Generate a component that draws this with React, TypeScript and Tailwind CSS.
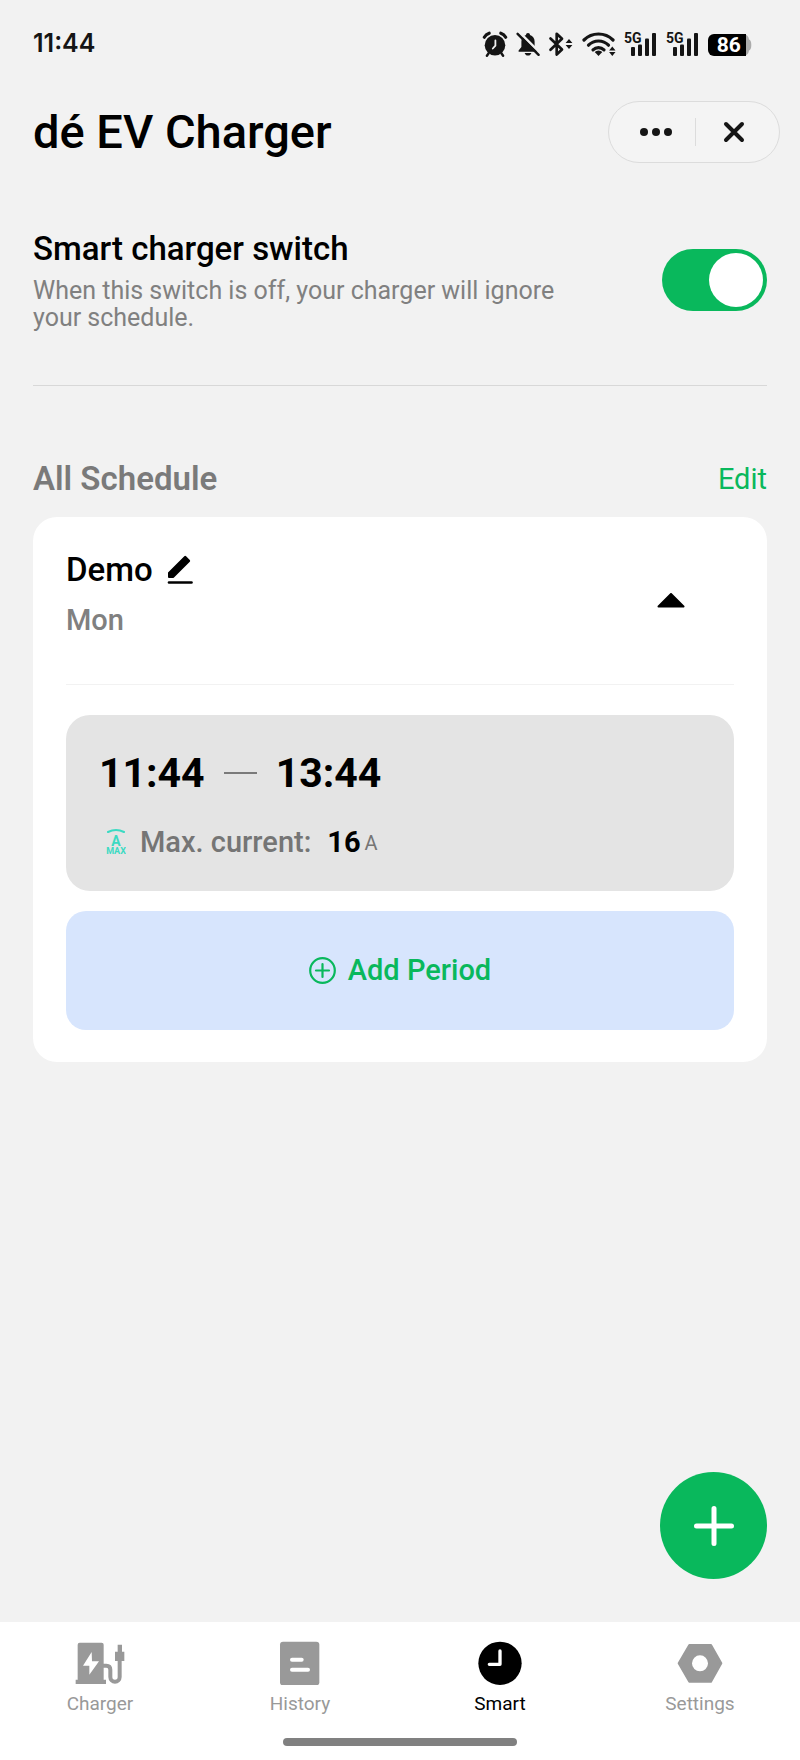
const SignalIcon = () => (
  <svg width="34" height="26" viewBox="0 0 34 26" fill="#151515" aria-hidden="true">
    <text x="0" y="12" fontSize="14" fontWeight="700" fontFamily="Roboto, sans-serif">5G</text>
    <rect x="7" y="16" width="4" height="9" rx="1" />
    <rect x="14" y="13.5" width="4" height="11.5" rx="1" />
    <rect x="21" y="7.5" width="4" height="17.5" rx="1" />
    <rect x="28" y="2" width="4" height="23" rx="1" />
  </svg>
);

const StatusBar = () => {
  return (
    <div className="flex h-[88px] items-center justify-between pl-[33px] pr-12">
      <span className="font-[Inter,sans-serif] text-[25px] font-semibold text-[#151515]">11:44</span>
      <div className="flex items-center gap-2">
        {/* alarm */}
        <svg width="26" height="26" viewBox="0 0 26 26" fill="none" stroke="#151515" strokeLinecap="round" aria-hidden="true">
          <circle cx="13" cy="14.3" r="10.3" fill="#151515" stroke="none" />
          <path d="M2.3 6.2A9 9 0 0 1 7.2 2.2M23.7 6.2A9 9 0 0 0 18.8 2.2" strokeWidth="3.2" />
          <path d="M6.5 22.5l-1.6 2.3M19.5 22.5l1.6 2.3" strokeWidth="2.4" />
          <path d="M13.4 9.5v5.2l-2.6 2.8" stroke="#f2f2f2" strokeWidth="1.8" />
        </svg>
        {/* muted bell */}
        <svg width="24" height="26" viewBox="0 0 24 26" fill="#151515" aria-hidden="true">
          <path d="M12 2c1.2 0 2 .8 2 2 3 1 4.6 3.5 4.6 6.5V16l2.6 3.500v1.200H2.600v-1.200L5.400 16v-5.500C5.400 7.500 7 5 10 4c0-1.200.8-2 2-2Z" />
          <path d="M8.600 22h6.800c-.6 1.700-1.800 2.600-3.400 2.600s-2.800-.9-3.400-2.600Z" />
          <path d="M3 .8l22 22" stroke="#f2f2f2" strokeWidth="2.400" />
          <path d="M1.600 2.800l21 21" stroke="#151515" strokeWidth="2.400" strokeLinecap="round" />
        </svg>
        {/* bluetooth */}
        <svg width="26" height="26" viewBox="0 0 26 26" aria-hidden="true">
          <path d="M2.500 7.500L14 18.500 8.700 23.500V2.800L14 7.800 2.500 18.800" fill="none" stroke="#151515" strokeWidth="2.700" strokeLinecap="round" strokeLinejoin="round" />
          <path d="M21 8l3.400 4h-6.800zM21 18l3.400-4h-6.800z" fill="#151515" />
        </svg>
        {/* wifi */}
        <svg width="34" height="26" viewBox="0 0 34 26" fill="none" stroke="#151515" strokeWidth="3.200" aria-hidden="true">
          <path d="M2 9A20.500 20.500 0 0 1 31 9" strokeLinecap="round" />
          <path d="M6.500 14.200A14 14 0 0 1 26.500 14.200" strokeLinecap="round" />
          <path d="M11 18.800A8 8 0 0 1 22 18.800" strokeLinecap="round" />
          <path d="M16.500 25l-3.800-4a5.500 5.500 0 0 1 7.600 0z" fill="#151515" stroke="none" />
          <path d="M30.300 15.500l3.200 4h-6.400zM30.300 25l3.200-4h-6.400z" fill="#151515" stroke="none" />
        </svg>
        <SignalIcon />
        <SignalIcon />
        {/* battery */}
        <svg width="44" height="26" viewBox="0 0 44 26" aria-hidden="true">
          <path d="M30 3h5a6 6 0 0 1 6 5.500c1.500.6 2.300 2 2.300 5.500s-.8 4.900-2.300 5.500a6 6 0 0 1-6 5.500h-5z" fill="#ababab" />
          <path d="M6 3h32v22H6a6 6 0 0 1-6-6V9a6 6 0 0 1 6-6Z" fill="#000" />
          <text x="20.700" y="21" textAnchor="middle" fill="#fff" fontSize="21" fontWeight="700" fontFamily="Roboto, sans-serif">86</text>
        </svg>
      </div>
    </div>
  );
};

const Header = () => {
  return (
    <header className="flex h-[88px] items-center justify-between pl-[33px] pr-5">
      <h1 className="text-[47px] font-medium leading-[56px]">dé EV Charger</h1>
      <div className="flex h-[62px] w-[172px] items-center rounded-full border border-[#dcdcdc] bg-[#f4f4f4]">
        <button type="button" aria-label="More" className="flex h-full flex-1 items-center justify-center pl-2">
          <svg width="32" height="8" viewBox="0 0 32 8" fill="#151515">
            <circle cx="4" cy="4" r="4" />
            <circle cx="16" cy="4" r="4" />
            <circle cx="28" cy="4" r="4" />
          </svg>
        </button>
        <span className="h-7 w-px bg-[#dcdcdc]" />
        <button type="button" aria-label="Close" className="flex h-full flex-1 items-center justify-center pr-1.5">
          <svg width="22" height="22" viewBox="0 0 22 22" stroke="#151515" strokeWidth="4" strokeLinecap="round">
            <path d="M3 3l16 16M19 3L3 19" />
          </svg>
        </button>
      </div>
    </header>
  );
};

const Period = () => {
  return (
    <div className="rounded-3xl bg-[#e4e4e4] px-[33px] pb-[31px] pt-[34px]">
      <div className="flex items-center text-[41px] font-bold leading-[48px]">
        <span>11:44</span>
        <span className="mx-[19px] h-0.5 w-[33px] bg-[#7a7a7a]" />
        <span>13:44</span>
      </div>
      <div className="mt-[27px] flex items-center text-[29px] leading-9">
        <svg width="20" height="28" viewBox="0 0 20 28" className="ml-[7px] mr-[14px]" fill="#3bdac2" fontFamily="Roboto, sans-serif" fontWeight="700" textAnchor="middle" aria-hidden="true">
          <path d="M2 4Q10 0 18 4" fill="none" stroke="#3bdac2" strokeWidth="2" strokeLinecap="round" />
          <text x="10" y="18" fontSize="14">A</text>
          <text x="10" y="26" fontSize="9">MAX</text>
        </svg>
        <span className="font-medium text-[#757575]">Max. current:</span>
        <span className="ml-4 font-bold">16</span>
        <span className="ml-1 pt-0.5 text-xl text-[#757575]">A</span>
      </div>
    </div>
  );
};

const ScheduleCard = () => {
  return (
    <section className="mt-[18px] rounded-3xl bg-white px-[33px] pb-8">
      <div className="flex items-center justify-between border-b border-[#f2f2f2]">
        <div className="pb-[46px] pt-[33px]">
          <div className="flex items-center gap-[14px]">
            <h3 className="text-[33px] font-medium leading-10">Demo</h3>
            <button type="button" aria-label="Rename schedule">
              <svg width="26" height="30" viewBox="0 0 26 30">
                <path d="M1 17.500L17.300 1.200q.9-.8 1.800 0l3.700 3.700q.8.9 0 1.800L7 22.500q-.6.600-1.400.600H2q-1 0-1-1z" />
                <path d="M2 27.500h22.500" stroke="#000" strokeWidth="2.600" strokeLinecap="round" />
              </svg>
            </button>
          </div>
          <p className="mt-3 text-[29px] font-medium leading-9 text-[#808080]">Mon</p>
        </div>
        <button type="button" aria-label="Collapse" className="mr-8 p-4">
          <svg width="30" height="16" viewBox="0 0 30 16">
            <path d="M15 1L27.500 13.500H2.500z" stroke="#000" strokeWidth="2" strokeLinejoin="round" />
          </svg>
        </button>
      </div>
      <div className="mt-[30px]">
        <Period />
        <button type="button" className="mt-5 flex h-[119px] w-full items-center justify-center gap-3 rounded-[20px] bg-[#d7e5fd] text-[29px] font-medium text-[#09b85c]">
          <svg width="27" height="27" viewBox="0 0 27 27" fill="none" stroke="#09b85c" strokeWidth="2.200" strokeLinecap="round">
            <circle cx="13.500" cy="13.500" r="12.300" />
            <path d="M13.500 7v13M7 13.500h13" />
          </svg>
          Add Period
        </button>
      </div>
    </section>
  );
};

const tabs = [
  {
    label: "Charger",
    icon: (
      <>
        <path d="M14 5h66q6 0 6 6v105h7v13H2v-13h6V11q0-6 6-6Z" />
        <path d="M50 33L24 74h19v27l29-40H51z" fill="#fff" />
        <path d="M84 74h10q12 0 12 12v22a14 14 0 0 0 28 0V58" fill="none" stroke="currentColor" strokeWidth="12" />
        <path d="M128 11h13v21h7v28h-28V32h8z" />
      </>
    ),
  },
  {
    label: "History",
    icon: (
      <>
        <rect x="15" y="2" width="118" height="131" rx="9" />
        <rect x="45" y="50" width="41" height="12" rx="6" fill="#fff" />
        <rect x="45" y="80" width="60" height="12" rx="6" fill="#fff" />
      </>
    ),
  },
  {
    label: "Smart",
    active: true,
    icon: (
      <>
        <circle cx="75" cy="67" r="65" />
        <path d="M75 30v40H43" fill="none" stroke="#fff" strokeWidth="10" strokeLinecap="round" strokeLinejoin="round" />
      </>
    ),
  },
  {
    label: "Settings",
    icon: (
      <>
        <path d="M11 67L43 12h65l31 55-31 55H43z" stroke="currentColor" strokeWidth="6" strokeLinejoin="round" />
        <circle cx="75" cy="67" r="24" fill="#fff" />
      </>
    ),
  },
];

const BottomNav = () => {
  return (
    <nav className="bg-white pb-[14px] pt-[19px]">
      <div className="grid grid-cols-4">
        {tabs.map((tab) => (
          <a
            key={tab.label}
            href="#"
            aria-current={tab.active ? "page" : undefined}
            className={`flex flex-col items-center gap-[7px] text-[19px] leading-6 ${tab.active ? "text-black" : "text-[#999999]"}`}
          >
            <svg width="50" height="44" viewBox="0 0 150 132" fill="currentColor" aria-hidden="true">
              {tab.icon}
            </svg>
            {tab.label}
          </a>
        ))}
      </div>
      <div className="mx-auto mt-[22px] h-2 w-[234px] rounded-full bg-[#808080]" />
    </nav>
  );
};

const App = () => {
  return (
    <div className="flex min-h-screen flex-col bg-[#f2f2f2] font-[Roboto,sans-serif] text-black">
      <StatusBar />
      <Header />
      <main className="flex flex-1 flex-col px-[33px]">
        <div className="flex items-center justify-between border-b border-[#d8d8d8] pb-[54px] pt-[53px]">
          <div className="max-w-[560px]">
            <label htmlFor="smart-switch" className="block text-[33px] font-medium leading-10">Smart charger switch</label>
            <p id="smart-hint" className="mt-2 text-[25px] leading-[27px] text-[#808080]">
              When this switch is off, your charger will ignore your schedule.
            </p>
          </div>
          <input
            id="smart-switch"
            type="checkbox"
            role="switch"
            aria-describedby="smart-hint"
            defaultChecked
            className="h-[62px] w-[105px] shrink-0 appearance-none rounded-full bg-gray-300 p-1 before:block before:size-[54px] before:rounded-full before:bg-white before:content-[''] checked:bg-[#09b85c] checked:before:ml-[43px]"
          />
        </div>

        <div className="mt-[73px] flex items-center justify-between">
          <h2 className="text-[33px] font-semibold leading-10 text-[#7a7a7a]">All Schedule</h2>
          <button type="button" className="text-[29px] leading-9 text-[#09b85c]">Edit</button>
        </div>
        <ScheduleCard />

        <button type="button" aria-label="Add schedule" className="mb-[43px] mt-auto flex size-[107px] items-center justify-center self-end rounded-full bg-[#09b85c]">
          <svg width="40" height="40" viewBox="0 0 40 40" stroke="#fff" strokeWidth="5" strokeLinecap="round">
            <path d="M20 2.500v35M2.500 20h35" />
          </svg>
        </button>
      </main>
      <BottomNav />
    </div>
  );
};

export default App;
